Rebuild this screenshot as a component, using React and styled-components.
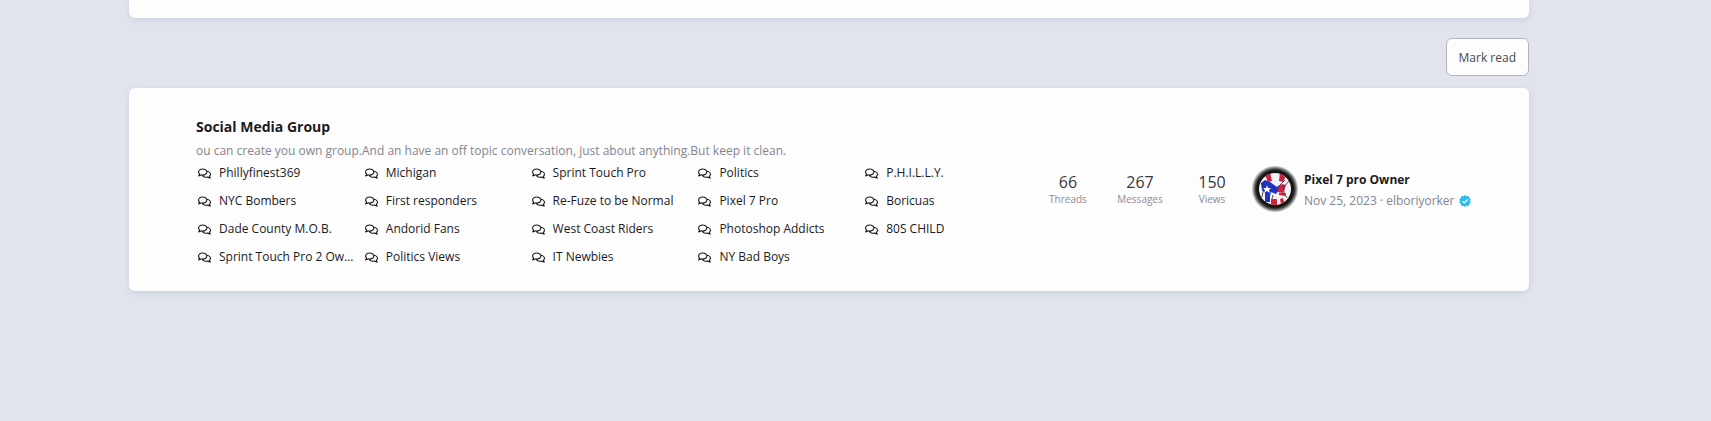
import React from "react";
import styled, { createGlobalStyle } from "styled-components";
import { FaRegComments } from "react-icons/fa";

const subforums = [
  "Phillyfinest369",
  "NYC Bombers",
  "Dade County M.O.B.",
  "Sprint Touch Pro 2 Owners",
  "Michigan",
  "First responders",
  "Andorid Fans",
  "Politics Views",
  "Sprint Touch Pro",
  "Re-Fuze to be Normal",
  "West Coast Riders",
  "IT Newbies",
  "Politics",
  "Pixel 7 Pro",
  "Photoshop Addicts",
  "NY Bad Boys",
  "P.H.I.L.L.Y.",
  "Boricuas",
  "80S CHILD",
];

const stats = [
  { label: "Threads", value: 66 },
  { label: "Messages", value: 267 },
  { label: "Views", value: 150 },
];

function AvatarImage() {
  return (
    <svg width="48" height="48" viewBox="0 0 48 48" aria-hidden="true">
      <defs>
        <radialGradient id="halo">
          <stop offset="0.76" stopColor="#141414" />
          <stop offset="0.84" stopColor="#141414" stopOpacity="0.75" />
          <stop offset="0.98" stopColor="#141414" stopOpacity="0" />
        </radialGradient>
        <clipPath id="disc">
          <circle cx="24" cy="24" r="16" />
        </clipPath>
      </defs>
      <circle cx="24" cy="24" r="24" fill="url(#halo)" />
      <g clipPath="url(#disc)">
        <rect x="8" y="8" width="32" height="32" fill="#f4f2f4" />
        <path d="M14 10l5-3 2 9-4 1z" fill="#c9203c" />
        <path d="M29 7l6 4-3 6-4-1z" fill="#c9203c" />
        <path
          d="M10 18l4-3 5 2 7 5 2-2 1 3-4 6-5-2-1 4 0 6-5 0 0-9-3-3z"
          fill="#1d35bd"
        />
        <path d="M28 21l3-2 4 1-2 5-1 3-6-1z" fill="#d2213c" />
        <path d="M20 34h6v6h-6zM28 28h7l-1 3-6-1zM29 34l3-1 2 7h-4z" fill="#d2213c" />
        <path
          d="M34 15l-6 6M38 16l-5 6v6l3 5M22 30l-1 4M10 18l3 4-2 10"
          fill="none"
          stroke="#3a2632"
          strokeWidth="0.8"
        />
        <path d="M16 20l1 3h3l-2 2 1 3-3-2-3 2 1-3-2-2h3z" fill="#fff" />
      </g>
    </svg>
  );
}

function VerifiedBadge() {
  return (
    <svg width="12" height="12" viewBox="0 0 24 24" role="img" aria-label="Verified">
      <path
        d="M12 0l3.2 2.3 3.9-.1 1.2 3.8 3.1 2.3L22.3 12l1.1 3.7-3.1 2.3-1.2 3.8-3.9-.1L12 24l-3.2-2.3-3.9.1L3.7 18 .6 15.7 1.7 12 .6 8.3 3.7 6l1.2-3.8 3.9.1z"
        fill="#2cbcec"
      />
      <path
        d="M7 12.2l3.6 3.6L17 9"
        fill="none"
        stroke="#fff"
        strokeWidth="2.6"
      />
    </svg>
  );
}

function App() {
  return (
    <Page>
      <GlobalStyle />
      <PreviousCard />
      <Actions>
        <MarkReadBtn type="button">Mark read</MarkReadBtn>
      </Actions>
      <Card>
        <Main>
          <Title>
            <TextLink href="#group">Social Media Group</TextLink>
          </Title>
          <Description>
            ou can create you own group.And an have an off topic conversation,
            just about anything.But keep it clean.
          </Description>
          <SubforumList>
            {subforums.map((name) => (
              <li key={name}>
                <SubforumLink href="#forum">
                  <FaRegComments size={13} />
                  <SubforumName>{name}</SubforumName>
                </SubforumLink>
              </li>
            ))}
          </SubforumList>
        </Main>
        <Stats>
          {stats.map(({ label, value }) => (
            <Stat key={label}>
              <StatLabel>{label}</StatLabel>
              <StatValue>{value}</StatValue>
            </Stat>
          ))}
        </Stats>
        <LastPost>
          <AvatarImage />
          <LastPostBody>
            <LastPostTitle href="#post">Pixel 7 pro Owner</LastPostTitle>
            <LastPostMeta>
              <span>
                Nov 25, 2023 · <TextLink href="#member">elboriyorker</TextLink>
              </span>
              <VerifiedBadge />
            </LastPostMeta>
          </LastPostBody>
        </LastPost>
      </Card>
    </Page>
  );
}

const GlobalStyle = createGlobalStyle`
  * {
    box-sizing: border-box;
  }

  body {
    margin: 0;
    background-color: #e1e4ed;
    color: #1b1b1d;
    font-family: "Open Sans", sans-serif;
    font-size: 12px;
  }
`;

const Page = styled.div`
  padding: 0 182px 40px 129px;
`;

const PreviousCard = styled.div`
  height: 18px;
  border-radius: 0 0 6px 6px;
  background-color: #fdfdfe;
  box-shadow: 0 2px 6px rgba(80, 90, 150, 0.14);
`;

const Actions = styled.div`
  display: flex;
  justify-content: flex-end;
  padding: 20px 0 12px;
`;

const MarkReadBtn = styled.button`
  height: 38px;
  padding: 0 12px;
  border: 1px solid #b2b3c2;
  border-radius: 6px;
  background-color: #fdfdfe;
  color: #48484c;
  font-family: inherit;
  font-size: 12px;
  cursor: pointer;
`;

const Card = styled.section`
  display: flex;
  padding: 29px 52px 20px 67px;
  border-radius: 6px;
  background-color: #fdfdfe;
  box-shadow: 0 2px 6px rgba(80, 90, 150, 0.14);
`;

const Main = styled.div`
  flex: 1;
  min-width: 0;
`;

const TextLink = styled.a`
  color: inherit;
  text-decoration: none;
`;

const Title = styled.h3`
  margin: 0 0 6px;
  font-size: 14px;
  font-weight: 700;
  line-height: 20px;
`;

const Description = styled.p`
  margin: 0;
  color: #85858e;
  line-height: 16px;
`;

const SubforumList = styled.ul`
  display: grid;
  grid-template-rows: repeat(4, 28px);
  grid-template-columns: repeat(5, minmax(0, 1fr));
  grid-auto-flow: column;
  column-gap: 8px;
  margin: 0;
  padding: 0 0 0 2px;
  list-style: none;
`;

const SubforumLink = styled.a`
  display: flex;
  align-items: center;
  gap: 8px;
  color: inherit;
  line-height: 28px;
  text-decoration: none;

  svg {
    flex-shrink: 0;
  }
`;

const SubforumName = styled.span`
  overflow: hidden;
  text-overflow: ellipsis;
  white-space: nowrap;
`;

const Stats = styled.dl`
  display: flex;
  margin: 54px 0 0;
  padding: 0 3px 0 8px;
`;

const Stat = styled.div`
  display: flex;
  flex-direction: column-reverse;
  justify-content: flex-end;
  width: 72px;
  text-align: center;
`;

const StatLabel = styled.dt`
  color: #8c8c97;
  font-size: 10px;
  line-height: 12px;
`;

const StatValue = styled.dd`
  margin: 0;
  color: #38383c;
  font-size: 16px;
  line-height: 22px;
`;

const LastPost = styled.div`
  display: flex;
  align-items: flex-start;
  gap: 5px;
  width: 226px;
  margin-top: 48px;
`;

const LastPostBody = styled.div`
  padding-top: 5px;
`;

const LastPostTitle = styled.a`
  display: block;
  color: inherit;
  font-weight: 700;
  line-height: 20px;
  text-decoration: none;
`;

const LastPostMeta = styled.div`
  display: flex;
  align-items: center;
  gap: 4px;
  color: #85858e;
  line-height: 22px;
  white-space: nowrap;
`;

export default App;
